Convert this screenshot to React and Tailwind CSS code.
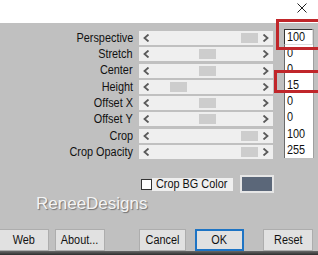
import React from "react";

const rows = [
  { label: "Perspective", thumb: 102, value: "100" },
  { label: "Stretch", thumb: 60, value: "0" },
  { label: "Center", thumb: 60, value: "0" },
  { label: "Height", thumb: 31, value: "15" },
  { label: "Offset X", thumb: 60, value: "0" },
  { label: "Offset Y", thumb: 60, value: "0" },
  { label: "Crop", thumb: 102, value: "100" },
  { label: "Crop Opacity", thumb: 102, value: "255" },
];

const font = { fontFamily: '"Liberation Sans", Arial, sans-serif' };

function Chevron({ dir }) {
  return (
    <svg width="7" height="8" viewBox="0 0 7 8" className="shrink-0">
      {dir === "left" ? (
        <path d="M5.5 0.5 L1.5 4 L5.5 7.5" fill="none" stroke="#5a5a5a" strokeWidth="1.8" />
      ) : (
        <path d="M1.5 0.5 L5.5 4 L1.5 7.5" fill="none" stroke="#5a5a5a" strokeWidth="1.8" />
      )}
    </svg>
  );
}

function Scroll({ thumb }) {
  return (
    <div className="relative w-[134px] h-[14px] bg-[#efefef] flex items-center justify-between px-[4px]">
      <Chevron dir="left" />
      <div
        className="absolute top-[2px] h-[10px] w-[17px] bg-[#cdcdcd]"
        style={{ left: thumb }}
      />
      <Chevron dir="right" />
    </div>
  );
}

function Btn({ children, className = "", ok = false }) {
  return (
    <div
      className={
        "h-[22px] flex items-center justify-center bg-[#e1e1e1] text-[12.5px] text-[#111] " +
        (ok ? "border-2 border-[#1e74c4] " : "border border-[#adadad] ") +
        className
      }
    >
      <span className="inline-block whitespace-nowrap scale-x-[0.87]">{children}</span>
    </div>
  );
}

export default function App() {
  return (
    <div className="relative w-[318px] h-[255px] bg-[#c0c0c0] overflow-hidden" style={font}>
      {/* title bar */}
      <div className="relative h-[23px] bg-white">
        <svg className="absolute left-[297px] top-[3px]" width="10" height="10" viewBox="0 0 10 10">
          <path d="M0.5 0.5 L9.5 9.5 M9.5 0.5 L0.5 9.5" stroke="#222" strokeWidth="1" />
        </svg>
      </div>

      {/* slider rows */}
      <div className="flex pt-[6px]">
        <div className="flex flex-col gap-[2.3px] pt-[2px] w-[273px]">
          {rows.map((r) => (
            <div key={r.label} className="flex items-center h-[14px]">
              <div className="w-[133px] text-right text-[12.5px] leading-none text-[#111] whitespace-nowrap">
                <span className="inline-block origin-right scale-x-[0.87]">{r.label}</span>
              </div>
              <div className="ml-[6px]">
                <Scroll thumb={r.thumb} />
              </div>
            </div>
          ))}
        </div>
        <div className="ml-[11px] w-[30px] h-[129px] bg-white border-l border-[#6a6a6a] border-r border-r-[#a0a0a0] flex flex-col text-[12.5px] leading-none text-[#111]">
          {rows.map((r, i) => (
            <div
              key={i}
              className={
                "h-[16.3px] flex items-center pl-[2px] " +
                (i === 0 ? "border border-[#333] border-r-[#ddd] border-b-[#ddd] -ml-[1px]" : "")
              }
            >
              <span className="inline-block origin-left scale-x-[0.87]">{r.value}</span>
            </div>
          ))}
        </div>
      </div>

      {/* crop bg color row */}
      <div className="flex items-center mt-[16px] ml-[141px]">
        <div className="w-[11px] h-[11px] bg-white border border-[#333]" />
        <div className="w-[81px] h-[13px] bg-[#efefef] flex items-center pl-[4px] text-[12.5px] leading-none text-[#111] whitespace-nowrap">
          <span className="inline-block origin-left scale-x-[0.87]">Crop BG Color</span>
        </div>
        <div className="ml-[7px] w-[34px] h-[18px] bg-[#5b6779] border-2 border-[#e6e6e6]" />
      </div>

      {/* watermark */}
      <div
        className="ml-[36px] mt-[2px] text-[17px] leading-none text-[#f4f4f4]"
        style={{ textShadow: "1px 1px 1px #707070" }}
      >
        ReneeDesigns
      </div>

      {/* buttons */}
      <div className="flex mt-[17px]">
        <Btn className="w-[50px] -ml-[1px]">Web</Btn>
        <Btn className="w-[50px] ml-[6px]">About...</Btn>
        <Btn className="w-[47px] ml-[34px]">Cancel</Btn>
        <Btn className="w-[49px] ml-[9px]" ok>OK</Btn>
        <Btn className="w-[50px] ml-[19px]">Reset</Btn>
      </div>
      <div className="absolute left-0 right-0 bottom-0 h-[4px] bg-gradient-to-b from-[#6a6a6a] to-[#2e2e2e]" />

      {/* red annotation boxes */}
      <div className="absolute left-[276px] top-[19px] w-[50px] h-[31px] border-[3px] border-[#c0262a]" />
      <div className="absolute left-[274px] top-[70px] w-[50px] h-[23px] border-[3px] border-[#c0262a]" />
    </div>
  );
}
